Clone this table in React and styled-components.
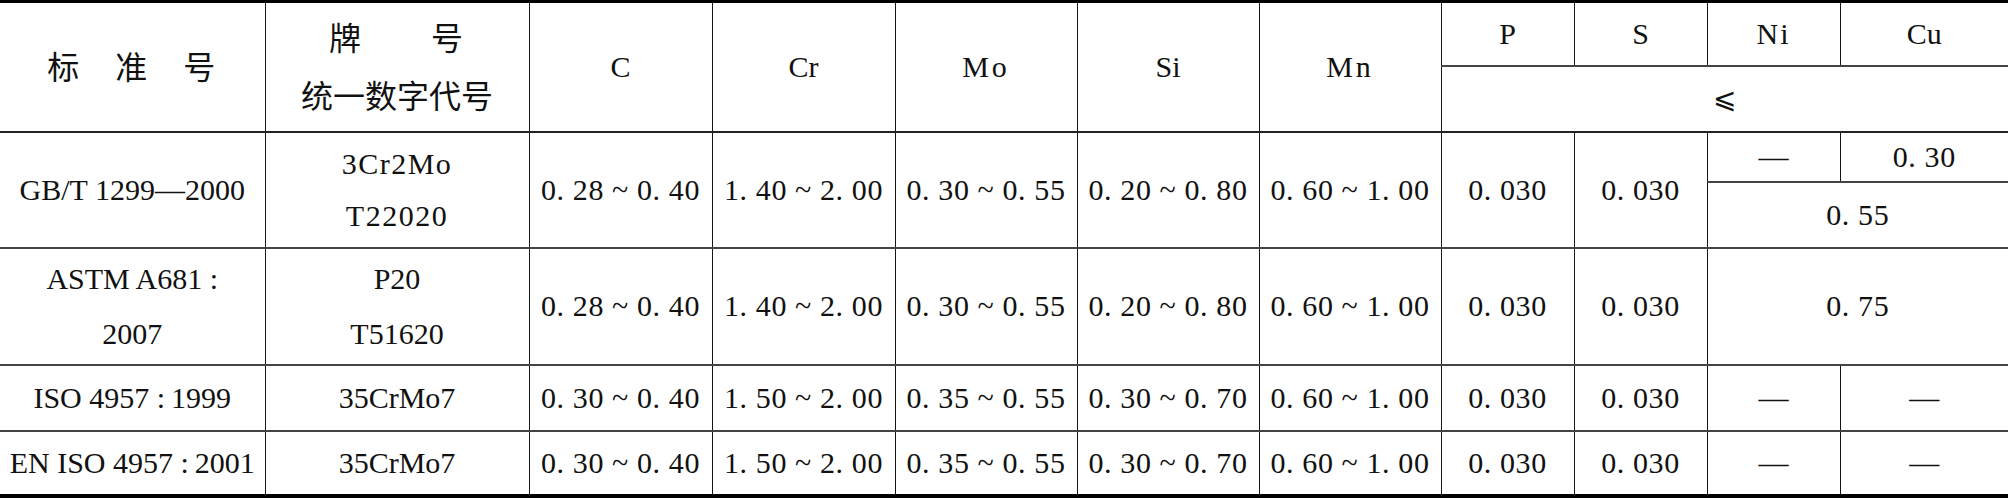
import React from "react";
import styled, { createGlobalStyle } from "styled-components";

const GlobalStyle = createGlobalStyle`
  html, body { margin: 0; padding: 0; background: #ffffff; }
  #root { width: 2008px; }
`;

const Table = styled.table`
  border-collapse: collapse;
  table-layout: fixed;
  width: 2008px;
  border-top: 3px solid #000;
  border-bottom: 4px solid #000;
  border-left: hidden;
  border-right: hidden;
  font-family: "Liberation Serif", "DejaVu Serif", serif;
  font-size: 30px;
  color: #111;
`;

const Row = styled.tr`
  height: ${(p) => p.$h}px;
`;

const Cell = styled.td`
  padding: 0;
  text-align: center;
  vertical-align: middle;
  white-space: nowrap;
  line-height: ${(p) => p.$lh || 34}px;
  border-left: 1px solid #161616;
  border-right: 1px solid #161616;
  border-top: 2px solid #444;
  border-bottom: 2px solid ${(p) => (p.$strong ? "#222" : "#444")};
  letter-spacing: ${(p) => p.$ls || 0}px;
`;

const Cjk = styled.span`
  font-family: "Noto Sans CJK SC", sans-serif;
  font-size: 32px;
  letter-spacing: ${(p) => p.$ls || 0}px;
`;

const Line = styled.div`
  line-height: ${(p) => p.$lh || 52}px;
  letter-spacing: ${(p) => p.$ls || 0}px;
`;

const Leq = styled.span`
  font-family: "DejaVu Serif", serif;
  font-size: 28px;
`;

const cols = [265, 264, 183, 183, 182, 182, 182, 133, 133, 133, 168];

const rows = [
  {
    std: ["GB/T 1299—2000"],
    grade: ["3Cr2Mo", "T22020"],
    vals: ["0. 28 ~ 0. 40", "1. 40 ~ 2. 00", "0. 30 ~ 0. 55", "0. 20 ~ 0. 80", "0. 60 ~ 1. 00", "0. 030", "0. 030"],
  },
  {
    std: ["ASTM A681 :", "2007"],
    grade: ["P20", "T51620"],
    vals: ["0. 28 ~ 0. 40", "1. 40 ~ 2. 00", "0. 30 ~ 0. 55", "0. 20 ~ 0. 80", "0. 60 ~ 1. 00", "0. 030", "0. 030"],
  },
  {
    std: ["ISO 4957 :\u20091999"],
    grade: ["35CrMo7"],
    vals: ["0. 30 ~ 0. 40", "1. 50 ~ 2. 00", "0. 35 ~ 0. 55", "0. 30 ~ 0. 70", "0. 60 ~ 1. 00", "0. 030", "0. 030"],
  },
  {
    std: ["EN ISO 4957 :\u20092001"],
    grade: ["35CrMo7"],
    vals: ["0. 30 ~ 0. 40", "1. 50 ~ 2. 00", "0. 35 ~ 0. 55", "0. 30 ~ 0. 70", "0. 60 ~ 1. 00", "0. 030", "0. 030"],
  },
];

const Lines = ({ items, lh, ls }) =>
  items.map((t) => (
    <Line key={t} $lh={lh} $ls={ls}>
      {t}
    </Line>
  ));

const Values = ({ vals, rowSpan }) =>
  vals.map((v, i) => (
    <Cell key={i} rowSpan={rowSpan} $ls={0.6}>
      {v}
    </Cell>
  ));

export default function App() {
  const [r1, r2, r3, r4] = rows;
  return (
    <>
      <GlobalStyle />
      <Table>
        <colgroup>
          {cols.map((w, i) => (
            <col key={i} style={{ width: w }} />
          ))}
        </colgroup>
        <thead>
          <Row $h={64}>
            <Cell rowSpan={2} $strong>
              <Cjk $ls={2}>标　准　号</Cjk>
            </Cell>
            <Cell rowSpan={2} $strong>
              <Line $lh={54}>
                <Cjk $ls={2}>牌　　号</Cjk>
              </Line>
              <Line $lh={54}>
                <Cjk>统一数字代号</Cjk>
              </Line>
            </Cell>
            <Cell rowSpan={2} $strong>C</Cell>
            <Cell rowSpan={2} $strong>Cr</Cell>
            <Cell rowSpan={2} $strong $ls={3}>Mo</Cell>
            <Cell rowSpan={2} $strong>Si</Cell>
            <Cell rowSpan={2} $strong $ls={3}>Mn</Cell>
            <Cell>P</Cell>
            <Cell>S</Cell>
            <Cell $ls={2}>Ni</Cell>
            <Cell>Cu</Cell>
          </Row>
          <Row $h={66}>
            <Cell colSpan={4} $strong>
              <Leq>⩽</Leq>
            </Cell>
          </Row>
        </thead>
        <tbody>
          <Row $h={50}>
            <Cell rowSpan={2} $ls={0.8}>
              <Lines items={r1.std} />
            </Cell>
            <Cell rowSpan={2}>
              <Lines items={r1.grade} ls={1.5} />
            </Cell>
            <Values vals={r1.vals} rowSpan={2} />
            <Cell>—</Cell>
            <Cell $ls={0.6}>0. 30</Cell>
          </Row>
          <Row $h={66}>
            <Cell colSpan={2} $ls={0.6}>0. 55</Cell>
          </Row>
          <Row $h={117}>
            <Cell $ls={0.8}>
              <Lines items={r2.std} lh={55} />
            </Cell>
            <Cell>
              <Lines items={r2.grade} lh={55} />
            </Cell>
            <Values vals={r2.vals} />
            <Cell colSpan={2} $ls={0.6}>0. 75</Cell>
          </Row>
          <Row $h={66}>
            <Cell $ls={0.5}>
              <Lines items={r3.std} />
            </Cell>
            <Cell $ls={1.5}>
              <Lines items={r3.grade} />
            </Cell>
            <Values vals={r3.vals} />
            <Cell>—</Cell>
            <Cell>—</Cell>
          </Row>
          <Row $h={65}>
            <Cell $ls={0.5}>
              <Lines items={r4.std} />
            </Cell>
            <Cell $ls={1.5}>
              <Lines items={r4.grade} />
            </Cell>
            <Values vals={r4.vals} />
            <Cell>—</Cell>
            <Cell>—</Cell>
          </Row>
        </tbody>
      </Table>
    </>
  );
}
